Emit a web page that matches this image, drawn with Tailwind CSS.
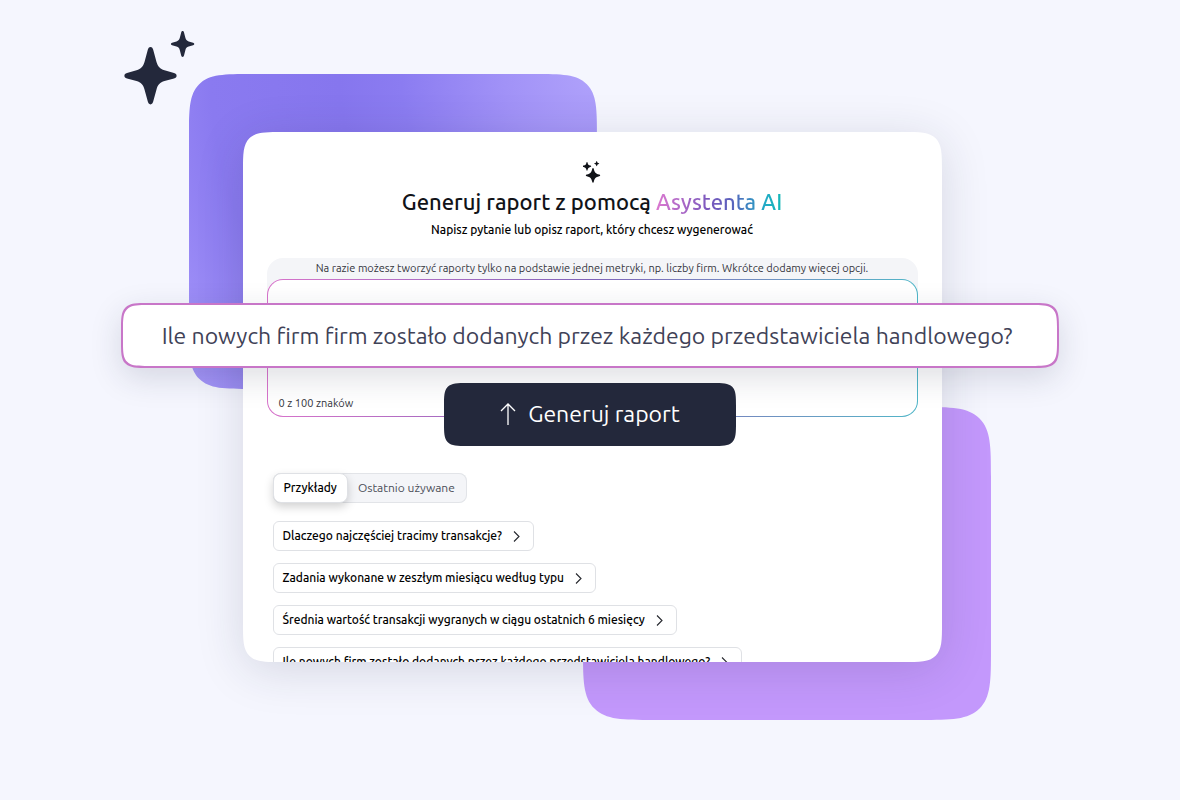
<!DOCTYPE html>
<html lang="pl">
<head>
<meta charset="utf-8">
<meta name="viewport" content="width=device-width, initial-scale=1">
<title>Generuj raport z pomocą Asystenta AI</title>
<script src="https://cdn.jsdelivr.net/npm/@tailwindcss/browser@4"></script>
</head>
<body class="min-h-screen overflow-x-hidden bg-[#f5f6fe] px-4 pt-[132px] pb-16 font-['Ubuntu','Noto_Sans',sans-serif] text-black">
<main class="relative mx-auto max-w-[938px]">

  <svg class="absolute -top-[102px] left-[2px] h-[76px] w-[72px] text-[#23283b]" viewBox="0 0 72 76" fill="currentColor" aria-hidden="true">
    <path d="M27.500 17c1.500 0 2.300 1.200 2.700 2.800l3.300 12.200c1.300 4.500 3.500 7 8 8.300l9.500 2.700c1.700.5 2.600 1.300 2.600 2.700s-.9 2.200-2.600 2.700l-9.500 2.700c-4.500 1.300-6.700 3.800-8 8.300l-3.300 12.200c-.4 1.600-1.200 2.800-2.700 2.800s-2.300-1.200-2.700-2.800l-3.300-12.200c-1.300-4.500-3.500-7-8-8.300l-9.500-2.700c-1.700-.5-2.600-1.300-2.600-2.700s.9-2.200 2.600-2.700l9.500-2.700c4.500-1.300 6.700-3.800 8-8.300l3.300-12.200c.4-1.600 1.200-2.800 2.700-2.800z"/>
    <path d="M59.600 1c.8 0 1.200.6 1.400 1.400l1.300 5.200c.6 2.200 1.400 3.200 3.400 3.800l4.400 1.300c.8.200 1.200.6 1.200 1.300s-.4 1.100-1.200 1.300l-4.400 1.300c-2 .6-2.800 1.600-3.400 3.800l-1.300 5.200c-.2.800-.6 1.400-1.400 1.400s-1.200-.6-1.400-1.400l-1.300-5.200c-.6-2.200-1.400-3.200-3.400-3.800l-4.400-1.300c-.8-.2-1.200-.6-1.200-1.300s.4-1.100 1.200-1.300l4.400-1.300c2-.6 2.800-1.600 3.400-3.800l1.300-5.200c.2-.8.6-1.400 1.400-1.400z"/>
  </svg>

  <div class="relative mx-auto max-w-[699px] translate-x-[2px]">
    <div class="absolute -top-[58px] -left-[54px] h-[315px] w-[408px] rounded-[64px] bg-[radial-gradient(circle_at_100%_0%,#b0a2fb_0%,#a192f7_18%,#8b7cf1_38%,#8676ee_50%,#8a7af0_75%,#a899fb_100%)] [corner-shape:squircle]"></div>
    <div class="absolute -right-[49px] -bottom-[58px] h-[313px] w-[408px] rounded-[72px] bg-[#c398fc] [corner-shape:squircle]"></div>

    <section class="relative h-[530px] overflow-hidden rounded-[40px] bg-white px-6 pt-[29px] shadow-[0_8px_48px_rgba(36,40,70,0.15)] [corner-shape:squircle]">
      <svg class="mx-auto h-[22px] w-[18px]" viewBox="0 0 18 22" fill="#111318" aria-hidden="true">
        <path d="M10 7c.5 0 .6.300.8.900.9 3.600 1.700 4.600 5.300 5.600.7.200 1.100.4 1.100.900s-.4.700-1.100.9c-3.600 1-4.400 1.900-5.300 5.500-.2.600-.3.900-.8.900s-.6-.3-.8-.9c-.9-3.600-1.700-4.500-5.300-5.500-.7-.2-1.100-.4-1.100-.9s.4-.7 1.100-.9c3.600-1 4.400-2 5.300-5.600.2-.6.300-.9.800-.9z"/>
        <path d="M4 .9c.4 0 .4.300.6.900.4 1.800.9 2.300 2.800 2.800.5.100.8.300.8.700s-.3.600-.8.700c-1.900.5-2.400 1-2.800 2.800-.2.600-.2.900-.6.900s-.4-.3-.6-.9c-.4-1.800-.9-2.300-2.800-2.800-.5-.1-.8-.3-.8-.7s.3-.6.800-.7c1.900-.5 2.400-1 2.800-2.800.2-.6.200-.9.600-.9z"/>
        <path d="M13.700 0c.3 0 .3.200.4.500.3 1.200.5 1.400 1.700 1.700.3.100.5.200.5.400s-.2.300-.5.400c-1.200.3-1.400.5-1.700 1.700-.1.300-.1.500-.4.500s-.3-.2-.4-.5c-.3-1.200-.5-1.400-1.700-1.700-.3-.1-.5-.2-.5-.4s.2-.3.500-.4c1.200-.3 1.400-.5 1.700-1.700.1-.3.100-.5.4-.5z"/>
      </svg>
      <h1 class="mt-[5px] text-center text-[22px] leading-7 font-medium text-[#111318]">Generuj raport z pomocą <span class="bg-[linear-gradient(90deg,#dc78d0_0%,#7a58bd_42%,#5a62bd_60%,#22a9c6_86%,#12b8b6_100%)] bg-clip-text text-transparent">Asystenta AI</span></h1>
      <p class="mt-1 text-center text-xs leading-5 font-medium">Napisz pytanie lub opisz raport, który chcesz wygenerować</p>

      <div class="mt-[18px] rounded-2xl bg-[#f4f5f8]">
        <p class="text-center text-[11px] leading-[21px] text-[#34363d]">Na razie możesz tworzyć raporty tylko na podstawie jednej metryki, np. liczby firm. Wkrótce dodamy więcej opcji.</p>
        <div class="h-[138px] rounded-2xl bg-linear-to-r from-[#d873cb] via-[#7f63b8] to-[#4fb6c8] p-px">
          <div class="flex h-full flex-col rounded-[15px] bg-white px-[11px] pb-[5px]">
            <textarea aria-label="Opis raportu" class="w-full flex-1 resize-none outline-none"></textarea>
            <p class="text-[11px] leading-4 text-[#34363d]">0 z 100 znaków</p>
          </div>
        </div>
      </div>

      <div class="mt-14 ml-[6px] flex h-[30px] w-fit rounded-lg bg-[#f4f5f8] text-xs inset-ring inset-ring-[#e2e4e8]">
        <button class="rounded-lg border border-[#dfe1e5] bg-white px-[10px] font-medium shadow-[0_4px_10px_rgba(0,0,0,0.18)]">Przykłady</button>
        <button class="pr-3 pl-[10px] text-[#4c4f58]">Ostatnio używane</button>
      </div>

      <div class="mt-[18px] ml-[6px] flex flex-col items-start gap-3 text-xs font-medium">
        <button class="flex h-[30px] shrink-0 items-center gap-2 rounded-md border border-[#dfe1e5] px-[9px] whitespace-nowrap">Dlaczego najczęściej tracimy transakcje?
          <svg class="size-[14px]" viewBox="0 0 14 14" fill="none" stroke="#25272d" stroke-width="1.100" aria-hidden="true"><path d="M4 2.500l5 5-5 5"/></svg></button>
        <button class="flex h-[30px] shrink-0 items-center gap-2 rounded-md border border-[#dfe1e5] px-[9px] whitespace-nowrap">Zadania wykonane w zeszłym miesiącu według typu
          <svg class="size-[14px]" viewBox="0 0 14 14" fill="none" stroke="#25272d" stroke-width="1.100" aria-hidden="true"><path d="M4 2.500l5 5-5 5"/></svg></button>
        <button class="flex h-[30px] shrink-0 items-center gap-2 rounded-md border border-[#dfe1e5] px-[9px] whitespace-nowrap">Średnia wartość transakcji wygranych w ciągu ostatnich 6 miesięcy
          <svg class="size-[14px]" viewBox="0 0 14 14" fill="none" stroke="#25272d" stroke-width="1.100" aria-hidden="true"><path d="M4 2.500l5 5-5 5"/></svg></button>
        <button class="flex h-[30px] shrink-0 items-center gap-2 rounded-md border border-[#dfe1e5] px-[9px] whitespace-nowrap">Ile nowych firm zostało dodanych przez każdego przedstawiciela handlowego?
          <svg class="size-[14px]" viewBox="0 0 14 14" fill="none" stroke="#25272d" stroke-width="1.100" aria-hidden="true"><path d="M4 2.500l5 5-5 5"/></svg></button>
      </div>
    </section>
  </div>

  <div class="absolute inset-x-0 top-[171px] flex flex-col items-center gap-[15px]">
    <input type="text" aria-label="Pytanie" value="Ile nowych firm firm zostało dodanych przez każdego przedstawiciela handlowego?" class="h-[65px] w-full rounded-[28px] border-2 border-[#c876c8] bg-white pr-[6px] text-center text-[23px] text-[#3f4257] shadow-[0_10px_32px_rgba(36,40,70,0.15)] outline-none [corner-shape:squircle]">
    <button class="flex h-[63px] w-[292px] items-center justify-center gap-3 rounded-[24px] bg-[#23283b] text-[23px] text-white [corner-shape:squircle]">
      <svg class="h-6 w-4" viewBox="0 0 16 24" fill="none" stroke="currentColor" stroke-width="1.300" aria-hidden="true"><path d="M8 22V1M1 8l7-7 7 7"/></svg>
      Generuj raport
    </button>
  </div>
</main>
</body>
</html>
